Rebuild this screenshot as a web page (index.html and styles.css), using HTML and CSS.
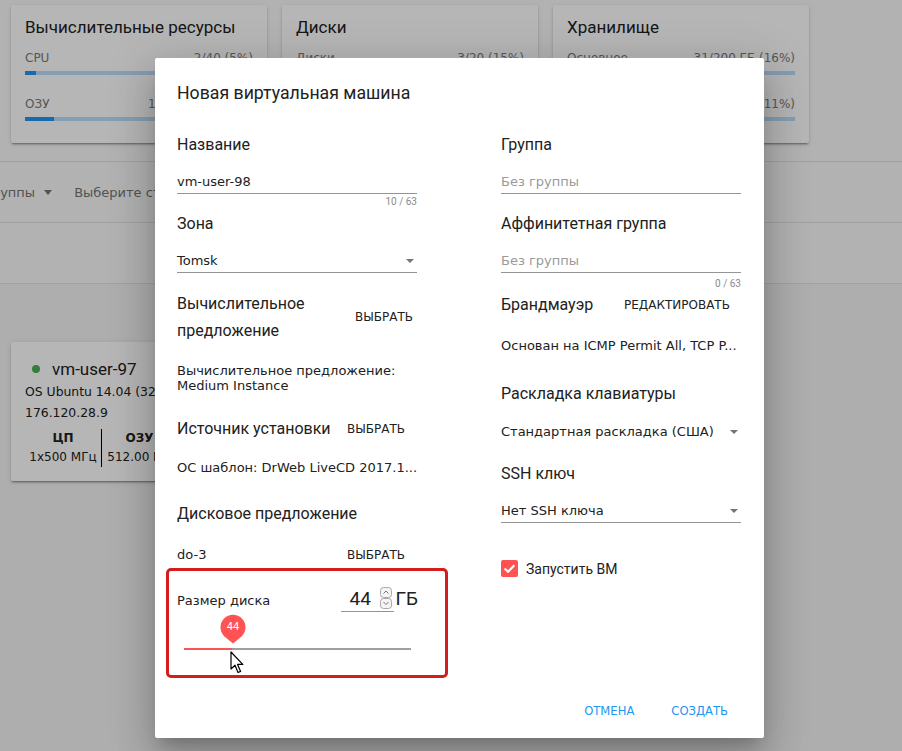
FILE: index.html
```html
<!DOCTYPE html>
<html lang="ru">
<head>
<meta charset="utf-8">
<title>Новая виртуальная машина</title>
<link rel="stylesheet" href="styles.css">
</head>
<body>
<div class="page">
  <div class="stats">
    <section class="stat-card">
      <h2 class="stat-title">Вычислительные ресурсы</h2>
      <div class="stat-row"><span>CPU</span><span>2/40 (5%)</span></div>
      <div class="bar"><div class="bar-fill" style="width:5%"></div></div>
      <div class="stat-row"><span>ОЗУ</span><span>1024/8192 (12%)</span></div>
      <div class="bar"><div class="bar-fill" style="width:12.6%"></div></div>
    </section>
    <section class="stat-card">
      <h2 class="stat-title">Диски</h2>
      <div class="stat-row"><span>Диски</span><span>3/20 (15%)</span></div>
      <div class="bar"><div class="bar-fill" style="width:15%"></div></div>
      <div class="stat-row"><span>Снимки</span><span>0/20 (0%)</span></div>
      <div class="bar"><div class="bar-fill" style="width:0%"></div></div>
    </section>
    <section class="stat-card">
      <h2 class="stat-title">Хранилище</h2>
      <div class="stat-row"><span>Основное</span><span>31/200 ГБ (16%)</span></div>
      <div class="bar"><div class="bar-fill" style="width:16%"></div></div>
      <div class="stat-row"><span>Вторичное</span><span>22/200 ГБ (11%)</span></div>
      <div class="bar"><div class="bar-fill" style="width:11%"></div></div>
    </section>
  </div>
  <div class="divider div-first"></div>
  <div class="toolbar">
    <span class="tool-select">Группы <span class="tool-caret"></span></span>
    <span class="tool-select">Выберите статус</span>
  </div>
  <div class="divider"></div>
  <div class="toolbar2"></div>
  <div class="divider"></div>
  <div class="vm-area">
    <div class="vm-card">
      <div class="vm-name"><span class="vm-dot"></span>vm-user-97</div>
      <div class="vm-line">OS Ubuntu 14.04 (32-bit)</div>
      <div class="vm-line">176.120.28.9</div>
      <div class="vm-specs">
        <div class="vm-spec"><b>ЦП</b><span>1x500 МГц</span></div>
        <div class="vm-spec vm-spec-sep"><b>ОЗУ</b><span>512.00 МБ</span></div>
        <div class="vm-spec vm-spec-sep"><b>Диск</b><span>44 ГБ</span></div>
      </div>
    </div>
  </div>
</div>

<div class="backdrop"></div>

<div class="dialog">
  <h1 class="dialog-title">Новая виртуальная машина</h1>
  <div class="dialog-body">
    <div class="col">
      <div class="label lh34">Название</div>
      <div class="field field-a"><span class="value">vm-user-98</span></div>
      <div class="hint">10 / 63</div>
      <div class="label lh28">Зона</div>
      <div class="field field-b"><span class="value">Tomsk</span><span class="caret"></span></div>
      <div class="pick pick-offer"><span class="label pick-label pl-offer">Вычислительное предложение</span><span class="btn">ВЫБРАТЬ</span></div>
      <div class="note note-offer">Вычислительное предложение:<br>Medium Instance</div>
      <div class="pick pick-src"><span class="label pick-label pl-src">Источник установки</span><span class="btn">ВЫБРАТЬ</span></div>
      <div class="note note-tpl">ОС шаблон: DrWeb LiveCD 2017.1...</div>
      <div class="label lh18 disk-label">Дисковое предложение</div>
      <div class="pick pick-disk"><span class="value pick-label pl-src">do-3</span><span class="btn">ВЫБРАТЬ</span></div>
      <div class="disk-box">
        <div class="size-row">
          <span class="size-label">Размер диска</span>
          <span class="size-group">
            <span class="num-input"><span class="num-value">44</span>
              <svg class="spinner" width="13" height="22" viewBox="0 0 13 22" aria-hidden="true">
                <rect x="0.5" y="0.5" width="11" height="10" rx="3" fill="#f4f4f4" stroke="#a8a8a8"/>
                <rect x="0.5" y="11.5" width="11" height="10" rx="3" fill="#f4f4f4" stroke="#a8a8a8"/>
                <path d="M3.5 6.5 L6 4 L8.5 6.5" fill="none" stroke="#777" stroke-width="1"/>
                <path d="M3.5 15 L6 17.5 L8.5 15" fill="none" stroke="#777" stroke-width="1"/>
              </svg>
            </span>
            <span class="unit">ГБ</span>
          </span>
        </div>
        <div class="slider">
          <div class="track"><div class="track-fill"></div></div>
          <div class="pin">
            <svg width="26" height="30" viewBox="0 0 26 30" aria-hidden="true"><path d="M13 29.5 L4.2 22.2 A12.5 12.5 0 1 1 21.8 22.2 Z" fill="#ff5252"/></svg>
            <span class="pin-text">44</span>
          </div>
        </div>
      </div>
    </div>
    <div class="col">
      <div class="label lh34">Группа</div>
      <div class="field field-a"><span class="placeholder">Без группы</span></div>
      <div class="hint"></div>
      <div class="label lh28">Аффинитетная группа</div>
      <div class="field field-b"><span class="placeholder">Без группы</span></div>
      <div class="hint hint-aff">0 / 63</div>
      <div class="pick pick-fw"><span class="label pick-label pl-fw">Брандмауэр</span><span class="btn">РЕДАКТИРОВАТЬ</span></div>
      <div class="note note-fw">Основан на ICMP Permit All, TCP P...</div>
      <div class="label lh18 kb-label">Раскладка клавиатуры</div>
      <div class="select-plain"><span class="value">Стандартная раскладка (США)</span><span class="caret"></span></div>
      <div class="label lh18 ssh-label">SSH ключ</div>
      <div class="field field-ssh"><span class="value">Нет SSH ключа</span><span class="caret"></span></div>
      <div class="check-row">
        <span class="checkbox"><svg width="17" height="17" viewBox="0 0 17 17" aria-hidden="true"><path d="M3.6 8.6 L7 11.8 L13.4 5.2" fill="none" stroke="#fff" stroke-width="2"/></svg></span>
        <span class="check-label">Запустить ВМ</span>
      </div>
    </div>
  </div>
  <div class="dialog-actions">
    <span class="action">ОТМЕНА</span>
    <span class="action">СОЗДАТЬ</span>
  </div>
</div>

<svg class="cursor" width="14" height="24" viewBox="0 0 14 24" aria-hidden="true">
  <path d="M1 1 L1 18 L5 14.2 L8 21.5 L10.6 20.4 L7.6 13.4 L12.8 13.4 Z" fill="#fff" stroke="#000" stroke-width="1.2" stroke-linejoin="round"/>
</svg>
</body>
</html>
```

FILE: styles.css
```css
* { box-sizing: border-box; }
html, body { margin: 0; padding: 0; }
body {
  font-family: "DejaVu Sans", sans-serif;
  color: #212121;
  background: #fafafa;
  width: 902px;
  height: 751px;
  overflow: hidden;
  position: relative;
}
.page { width: 902px; height: 751px; overflow: hidden; }

/* stats cards */
.stats {
  display: grid;
  grid-template-columns: 256px 256px 256px;
  column-gap: 15px;
  padding: 5px 0 0 11px;
}
.stat-card {
  background: #fff;
  border-radius: 2px;
  padding: 11px 14px 22px;
  box-shadow: 0 3px 1px -2px rgba(0,0,0,.2), 0 2px 2px 0 rgba(0,0,0,.14), 0 1px 5px 0 rgba(0,0,0,.12);
}
.stat-title {
  margin: 0;
  font: 400 17px/22px Roboto, sans-serif;
  color: #212121;
}
.stat-row {
  display: flex;
  justify-content: space-between;
  font-size: 12px;
  line-height: 16px;
  color: #7a7a7a;
  margin-top: 12px;
}
.bar + .stat-row { margin-top: 21px; }
.bar { height: 4px; background: #bbdefb; margin-top: 5px; }
.bar-fill { height: 100%; background: #2196f3; }

.divider { height: 1px; background: #e0e0e0; }
.div-first { margin-top: 18px; }
.toolbar {
  height: 60px;
  display: flex;
  align-items: center;
  gap: 22px;
  margin-left: -16px;
  font: 400 13px "DejaVu Sans", sans-serif;
  color: #757575;
}
.tool-select { display: inline-flex; align-items: center; gap: 9px; }
.tool-caret {
  width: 0; height: 0;
  border-left: 4px solid transparent;
  border-right: 4px solid transparent;
  border-top: 5px solid #757575;
}
.toolbar2 { height: 60px; }
.vm-area { background: #f4f4f4; height: 467px; padding: 58px 0 0 11px; }
.vm-card {
  width: 262px;
  background: #fff;
  border-radius: 2px;
  padding: 15px 14px 14px;
  box-shadow: 0 3px 1px -2px rgba(0,0,0,.2), 0 2px 2px 0 rgba(0,0,0,.14), 0 1px 5px 0 rgba(0,0,0,.12);
}
.vm-name {
  display: flex;
  align-items: center;
  font: 400 17px/24px Roboto, sans-serif;
  color: #212121;
  padding-left: 7px;
}
.vm-dot { width: 8px; height: 8px; border-radius: 50%; background: #4caf50; margin-right: 12px; }
.vm-line { font-size: 12.4px; line-height: 21px; color: #212121; white-space: nowrap; }
.vm-specs { display: flex; margin-top: 6px; }
.vm-spec {
  width: 76px;
  display: flex;
  flex-direction: column;
  align-items: center;
  font-size: 12px;
  line-height: 19px;
  white-space: nowrap;
}
.vm-spec b { font-weight: 700; }
.vm-spec-sep { border-left: 1px solid #000; }

.backdrop { position: absolute; inset: 0; background: rgba(0,0,0,.288); }

/* dialog */
.dialog {
  position: absolute;
  left: 155px;
  top: 58px;
  width: 609px;
  height: 680px;
  background: #fff;
  border-radius: 2px;
  padding: 24px 0 9px;
  display: flex;
  flex-direction: column;
  box-shadow: 0 11px 15px -7px rgba(0,0,0,.2), 0 24px 38px 3px rgba(0,0,0,.14), 0 9px 46px 8px rgba(0,0,0,.12);
}
.dialog-title {
  margin: 0;
  padding: 0 22px;
  font: 400 17.7px/23px Roboto, sans-serif;
  color: #212121;
}
.dialog-body {
  margin-top: 23px;
  padding: 0 23px 0 22px;
  display: grid;
  grid-template-columns: 240px 240px;
  column-gap: 84px;
}
.col { display: flex; flex-direction: column; }
.label { font: 400 16px Roboto, sans-serif; color: #212121; }
.lh34 { line-height: 34px; }
.lh28 { line-height: 28px; }
.lh18 { line-height: 18px; }
.value { font-size: 13px; color: #212121; }
.placeholder { font-size: 13px; color: #9a9a9a; }
.field {
  display: flex;
  align-items: center;
  justify-content: space-between;
  line-height: 18px;
  padding-bottom: 2px;
  border-bottom: 1px solid #949494;
}
.field-a { padding-top: 11px; }
.field-b { padding-top: 14px; }
.field-ssh { margin-top: 19px; }
.caret {
  width: 0; height: 0;
  margin-right: 3px;
  border-left: 4px solid transparent;
  border-right: 4px solid transparent;
  border-top: 4px solid #757575;
}
.hint {
  height: 16px;
  text-align: right;
  font: 400 10px/16px Roboto, sans-serif;
  color: #8a8a8a;
}
.hint-aff { margin-top: 3px; }

.pick { display: flex; align-items: center; }
.pick-label { flex: none; }
.pl-offer { width: 170px; line-height: 27px; }
.pl-src { width: 162px; line-height: 28px; }
.pl-fw { width: 115px; line-height: 26px; }
.pick-offer { margin-top: 17px; }
.pick-src { margin-top: 22px; }
.pick-disk { margin-top: 19px; }
.pick-disk .pl-src { line-height: 26px; }
.btn {
  padding: 0 8px;
  font: 400 12px/26px "DejaVu Sans", sans-serif;
  color: #212121;
  white-space: nowrap;
}
.note { font-size: 13px; color: #212121; white-space: nowrap; }
.note-offer { margin-top: 19px; line-height: 15px; }
.note-tpl { margin-top: 16px; line-height: 18px; }
.note-fw { margin-top: 19px; line-height: 18px; }
.disk-label { margin-top: 28px; }
.kb-label { margin-top: 30px; }
.ssh-label { margin-top: 24px; }
.select-plain {
  margin-top: 20px;
  display: flex;
  align-items: center;
  justify-content: space-between;
  line-height: 18px;
}

.disk-box {
  margin: 0 0 0 -11px;
  width: 282px;
  height: 110px;
  border: 3px solid #d21e1e;
  border-radius: 5px;
}
.size-row {
  margin-top: 14px;
  padding: 0 27px 0 8px;
  display: flex;
  align-items: center;
  justify-content: space-between;
  height: 27px;
}
.size-label { font-size: 13px; color: #212121; margin-top: 3px; }
.size-group { display: flex; align-items: center; }
.num-input {
  width: 53px;
  height: 27px;
  display: flex;
  align-items: center;
  padding-left: 8px;
  border-bottom: 1px solid #949494;
}
.num-value { font: 400 19px Roboto, sans-serif; color: #212121; }
.spinner { margin-left: auto; margin-right: 1px; }
.unit { font: 400 19px Roboto, sans-serif; color: #212121; margin-left: 1px; }

.slider {
  position: relative;
  margin-left: 15px;
  width: 227px;
  padding-top: 36px;
}
.track { height: 2px; background: #a0a0a0; }
.track-fill { width: 48px; height: 2px; background: #ff5252; }
.pin { position: absolute; left: 36px; top: 2px; width: 26px; height: 30px; }
.pin svg { display: block; }
.pin-text {
  position: absolute;
  left: 0; top: 0;
  width: 26px;
  text-align: center;
  font: 400 11px/26px Roboto, sans-serif;
  color: #fff;
}

.check-row { margin-top: 37px; display: flex; align-items: center; }
.checkbox {
  width: 17px; height: 17px;
  border-radius: 2px;
  background: #ff5252;
  display: flex;
}
.check-label { margin-left: 8px; font: 400 14px Roboto, sans-serif; color: #212121; }

.dialog-actions {
  margin-top: auto;
  display: flex;
  justify-content: flex-end;
  padding: 0 18px;
}
.action {
  padding: 0 18px;
  font: 400 11.6px/36px "DejaVu Sans", sans-serif;
  color: #2196f3;
}
.action + .action { margin-left: 1px; }

.cursor { position: absolute; left: 230px; top: 651px; }
```
